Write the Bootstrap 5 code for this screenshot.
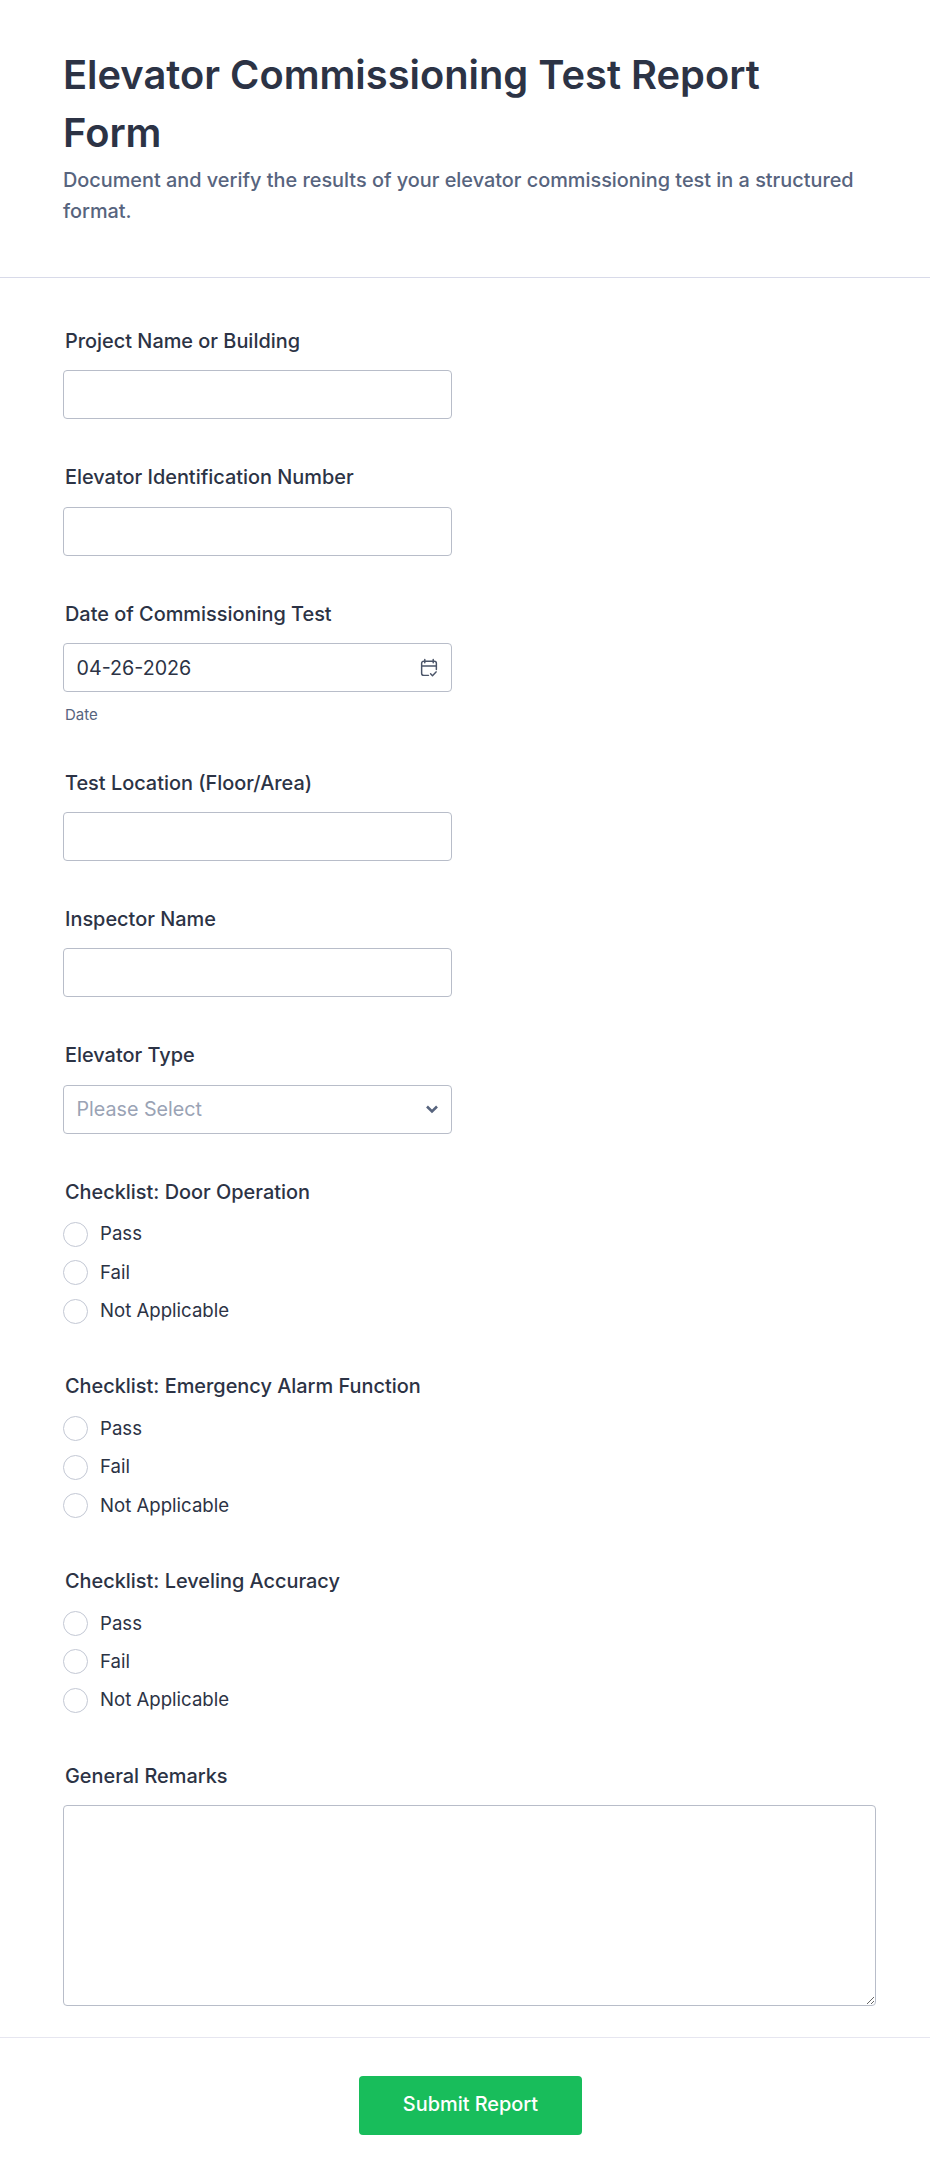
<!DOCTYPE html>
<html lang="en">
<head>
<meta charset="utf-8">
<title>Elevator Commissioning Test Report Form</title>
<link href="https://cdn.jsdelivr.net/npm/bootstrap@5.3.0/dist/css/bootstrap.min.css" rel="stylesheet">
<style>
body{font-family:Inter,"Liberation Sans",sans-serif;color:#2c3345;background:#fff}
.fm-head{padding:46px 54px 50px 63px;border-bottom:1px solid #d8dae9}
.fm-title{font-size:39.85px;font-weight:600;line-height:58px;margin:0;color:#2c3345;max-width:760px}
.fm-sub{font-size:19.86px;font-weight:500;line-height:31px;margin:3px 0 0;color:#57647e}
.fm-body{padding:5px 54px 0 63px}
.fm-field{padding-top:44px}
.fm-field-next{padding-top:44.5px}
.fm-label{display:block;font-size:19.9px;font-weight:500;line-height:28px;margin:0 0 15.4px 2px;color:#2c3345}
.fm-input{width:389px;height:49px;border:1px solid #b8bdc9;border-radius:4px;font-size:19.7px;color:#2c3345;padding:0 12.5px;box-shadow:none}
.fm-date{position:relative;width:389px}
.fm-date svg{position:absolute;right:13px;top:15px}
.fm-hint{font-size:15px;line-height:18px;color:#57647e;margin:14px 0 0 2px}
.fm-select{color:#9aa3b5;background-position:right 12px center;background-size:14px 10px;background-image:url("data:image/svg+xml,%3csvg xmlns='http://www.w3.org/2000/svg' viewBox='0 0 14 10'%3e%3cpath fill='none' stroke='%2357647e' stroke-width='2.6' d='M2 2.5l5 5 5-5'/%3e%3c/svg%3e")}
.fm-radio{display:flex;align-items:center;height:38.4px;margin:0;padding:0}
.fm-radio .form-check-input{width:25px;height:25px;margin:0 12px 0 0;float:none;border:1.5px solid #c3c8d4;flex:none}
.fm-radio .form-check-label{font-size:18.6px;color:#2c3345}
.fm-group{margin:-6px 0 -2px}
.fm-area{display:block;width:100%;height:201px;border:1px solid #b8bdc9;border-radius:4px}
.fm-foot{margin-top:31px;border-top:1px solid #e6e6f0;padding:38px 0 50px 11px}
.fm-submit{width:223px;height:59px;background:#18bd5b;border:0;border-radius:4px;color:#fff;font-size:19.9px;font-weight:500;padding:0}
</style>
</head>
<body>
<main>
<header class="fm-head">
<h1 class="fm-title">Elevator Commissioning Test Report Form</h1>
<p class="fm-sub">Document and verify the results of your elevator commissioning test in a structured format.</p>
</header>
<form class="fm-body">
<div class="fm-field"><label class="fm-label" for="a">Project Name or Building</label><input id="a" class="form-control fm-input" type="text"></div>
<div class="fm-field"><label class="fm-label" for="b">Elevator Identification Number</label><input id="b" class="form-control fm-input" type="text"></div>
<div class="fm-field"><label class="fm-label" for="c">Date of Commissioning Test</label>
<div class="fm-date"><input id="c" class="form-control fm-input" type="text" value="04-26-2026">
<svg width="20" height="20" viewBox="0 0 19 19" fill="none" stroke="#4a5468" stroke-width="1.4" stroke-linecap="round" stroke-linejoin="round"><path d="M9 16.5H4.5a2 2 0 0 1-2-2V5a2 2 0 0 1 2-2h10a2 2 0 0 1 2 2v6M2.5 7.5h14M5.5 1.5v3M13.5 1.5v3M11 15l1.8 1.8 3.4-3.6"/></svg></div>
<div class="fm-hint">Date</div></div>
<div class="fm-field fm-field-next"><label class="fm-label" for="d">Test Location (Floor/Area)</label><input id="d" class="form-control fm-input" type="text"></div>
<div class="fm-field"><label class="fm-label" for="e">Inspector Name</label><input id="e" class="form-control fm-input" type="text"></div>
<div class="fm-field"><label class="fm-label" for="f">Elevator Type</label><select id="f" class="form-select fm-input fm-select"><option>Please Select</option></select></div>
<div class="fm-field"><div class="fm-label">Checklist: Door Operation</div><div class="fm-group">
<div class="form-check fm-radio"><input class="form-check-input" type="radio" name="r1" id="r11"><label class="form-check-label" for="r11">Pass</label></div>
<div class="form-check fm-radio"><input class="form-check-input" type="radio" name="r1" id="r12"><label class="form-check-label" for="r12">Fail</label></div>
<div class="form-check fm-radio"><input class="form-check-input" type="radio" name="r1" id="r13"><label class="form-check-label" for="r13">Not Applicable</label></div></div></div>
<div class="fm-field"><div class="fm-label">Checklist: Emergency Alarm Function</div><div class="fm-group">
<div class="form-check fm-radio"><input class="form-check-input" type="radio" name="r2" id="r21"><label class="form-check-label" for="r21">Pass</label></div>
<div class="form-check fm-radio"><input class="form-check-input" type="radio" name="r2" id="r22"><label class="form-check-label" for="r22">Fail</label></div>
<div class="form-check fm-radio"><input class="form-check-input" type="radio" name="r2" id="r23"><label class="form-check-label" for="r23">Not Applicable</label></div></div></div>
<div class="fm-field"><div class="fm-label">Checklist: Leveling Accuracy</div><div class="fm-group">
<div class="form-check fm-radio"><input class="form-check-input" type="radio" name="r3" id="r31"><label class="form-check-label" for="r31">Pass</label></div>
<div class="form-check fm-radio"><input class="form-check-input" type="radio" name="r3" id="r32"><label class="form-check-label" for="r32">Fail</label></div>
<div class="form-check fm-radio"><input class="form-check-input" type="radio" name="r3" id="r33"><label class="form-check-label" for="r33">Not Applicable</label></div></div></div>
<div class="fm-field"><label class="fm-label" for="g">General Remarks</label><textarea id="g" class="fm-area"></textarea></div>
</form>
<footer class="fm-foot d-flex justify-content-center"><button type="button" class="btn fm-submit">Submit Report</button></footer>
</main>
<script src="https://cdn.jsdelivr.net/npm/bootstrap@5.3.0/dist/js/bootstrap.bundle.min.js"></script>
</body>
</html>
